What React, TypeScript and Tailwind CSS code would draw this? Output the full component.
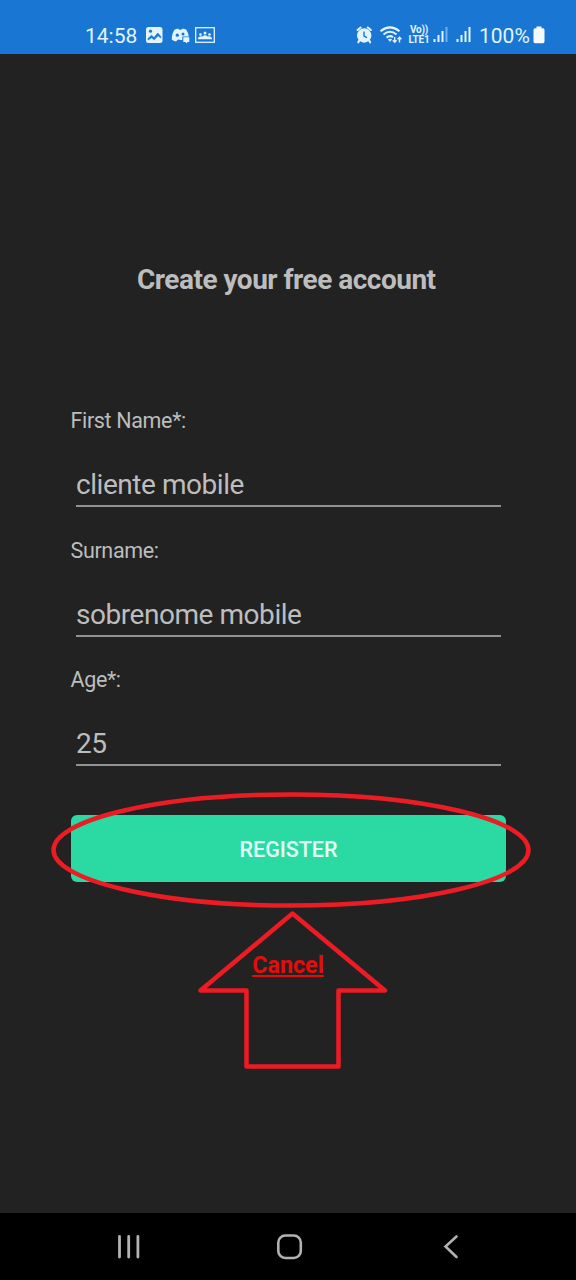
import type { ReactNode } from 'react';

const INK = '#e2f4ff';
const BAR = '#1976d2';

function LeftIcons() {
  return (
    <svg className="ml-[7px] h-[22px] w-[74px]" viewBox="144 24 74 22" fill="none">
      <rect x="146" y="27" width="16.5" height="16" rx="2.5" fill={INK} />
      <circle cx="150.5" cy="31.2" r="1.6" fill={BAR} />
      <path d="M148 40 V38.5 L151.5 35.3 L154 37.5 L157.8 33 L160.800 36.500 V38 L158 35.800 L154.300 39.800 L151.500 37.800 Z" fill={BAR} stroke={BAR} strokeWidth="0.6" />
      <path d="M174.5 29.7 Q177 28.3 178.5 28.8 L179.2 29.8 H181.300 L182 28.8 Q184.5 28.3 186.300 29.7 Q188.500 33 188.800 36.500 H182.300 V40 H181 L178 39.5 L176 41.5 Q173.500 41 171.800 39.800 Q171.500 34 174.500 29.700 Z" fill={INK} />
      <circle cx="177.300" cy="35.2" r="1.6" fill={BAR} />
      <circle cx="183" cy="34" r="1.5" fill={BAR} />
      <path d="M183.300 37.300 H189.300 V42 H187.500 L186.500 43.500 L185.500 42 H183.300 Z" fill={INK} />
      <rect x="195.700" y="27.700" width="18.600" height="14.600" stroke={INK} strokeWidth="1.300" />
      <g fill={INK}>
        <circle cx="205" cy="33" r="1.500" />
        <circle cx="200.500" cy="34.5" r="1.300" />
        <circle cx="209.500" cy="34.5" r="1.300" />
        <path d="M198 39.300 V37.800 Q200 35.5 202.300 36.500 Q205 34 207.700 36.500 Q210 35.5 212 37.800 V39.300 Z" />
      </g>
    </svg>
  );
}

function AlarmWifi() {
  return (
    <svg className="h-[22px] w-[52px]" viewBox="354 24 52 22" fill="none">
      <circle cx="364.200" cy="35.500" r="7.200" fill={INK} />
      <path d="M357.600 30 L360.600 27.500 M370.800 30 L367.800 27.500 M359.300 40.500 L358.300 42.300 M369.100 40.500 L370.100 42.300" stroke={INK} strokeWidth="2.100" strokeLinecap="round" />
      <path d="M364 31.500 V36 L367 37.700" stroke={BAR} strokeWidth="1.400" />
      <path d="M380.500 31.300 Q390 23.500 399.500 31.300 M383.500 34.500 Q390 29 396.500 34.500 M386.500 37.600 Q390 34.800 393 37.300" stroke={INK} strokeWidth="2" />
      <path d="M387.900 39.600 Q390 38 392.100 39.600 L390 41.800 Z" fill={INK} />
      <path d="M394.700 37 V42 M392.800 40.300 L394.700 42.300 L396.600 40.300 M399.500 42.500 V37.500 M397.600 39.300 L399.500 37.300 L401.400 39.300" stroke={INK} strokeWidth="1.400" />
    </svg>
  );
}

function Signal({ weak = false }: { weak?: boolean }) {
  return (
    <svg className="h-[18px] w-[16px]" viewBox="0 0 16 18" fill={INK}>
      <rect x="0.500" y="13" width="2" height="3" />
      <rect x="4.500" y="9" width="2" height="7" />
      <rect x="8.500" y="5" width="2" height="11" />
      <rect x="12.500" y="1" width="2" height="15" opacity={weak ? 0.45 : 1} />
    </svg>
  );
}

function StatusBar() {
  return (
    <header className="flex h-[54px] items-start bg-[#1976d2] pt-6 text-[#e2f4ff]">
      <div className="ml-[85px] w-[52px] text-[21px] leading-[24px] whitespace-nowrap">14:58</div>
      <LeftIcons />
      <div className="ml-[136px] flex h-[22px]">
        <AlarmWifi />
        <div className="ml-[2px] mt-[1px] w-[22px] text-center text-[10px] leading-[10px] font-bold tracking-[-0.2px] whitespace-nowrap">
          <div>Vo))</div>
          <div>LTE1</div>
        </div>
        <div className="mt-[2px] ml-[3px] flex gap-[7px]">
          <Signal weak />
          <Signal />
        </div>
        <div className="ml-[7px] w-[51px] text-[21px] leading-[24px] whitespace-nowrap">100%</div>
        <svg className="ml-[3px] h-[22px] w-[12px]" viewBox="0 0 12 22" fill="#f4faff">
          <path d="M3.500 2.500 H8.500 V4.300 H10 Q11.500 4.300 11.500 6 V17.500 Q11.500 19.200 10 19.200 H2 Q0.500 19.200 0.500 17.500 V6 Q0.500 4.300 2 4.300 H3.500 Z" />
        </svg>
      </div>
    </header>
  );
}

function Field({ label, children }: { label: string; children: ReactNode }) {
  return (
    <div className="h-[129.600px] whitespace-nowrap">
      <div className="pl-[70.500px] pt-px text-[21.500px] leading-[26px] tracking-[-0.350px]">{label}</div>
      <div className="mr-[75px] ml-[76px] mt-[35px] h-[38px] border-b-2 border-[#929292] text-[28px] leading-[32px] tracking-[-0.450px]">{children}</div>
    </div>
  );
}

export default function App() {
  return (
    <div className="relative flex h-[1280px] w-[576px] flex-col overflow-hidden bg-[#222222] font-['Roboto',sans-serif] text-[#bdbdbd]">
      <StatusBar />
      <main className="flex h-[1159px] flex-col">
        <h1 className="mt-[210px] pl-[137px] text-[28px] leading-[32px] font-bold tracking-[-0.500px] whitespace-nowrap">Create your free account</h1>
        <div className="mt-[111px] h-[408px]">
          <Field label="First Name*:">cliente mobile</Field>
          <Field label="Surname:">sobrenome mobile</Field>
          <Field label="Age*:">25</Field>
        </div>
        <button className="ml-[71px] h-[67px] w-[435px] rounded-[6px] bg-[#2bdaa3] pt-[3px] text-[21.500px] font-medium tracking-[-0.050px] text-[#e2fff5]">REGISTER</button>
        <a className="mt-[69px] self-center text-[23.300px] leading-[28px] font-bold text-[#e60c0c] underline decoration-2 underline-offset-[2px]">Cancel</a>
      </main>
      <nav className="flex h-[67px] items-start bg-black pt-[20px]">
        <svg className="ml-[116px] h-[28px] w-[26px]" viewBox="0 0 26 28" stroke="#b2b2b2" strokeWidth="2.800" strokeLinecap="round">
          <path d="M3.500 3.500 V24 M12.700 3.500 V24 M21.900 3.500 V24" />
        </svg>
        <svg className="ml-[133px] h-[28px] w-[28px]" viewBox="0 0 28 28" fill="none" stroke="#b2b2b2" strokeWidth="2.600">
          <rect x="3.300" y="2.500" width="22.500" height="22.500" rx="7" />
        </svg>
        <svg className="ml-[139px] h-[28px] w-[20px]" viewBox="0 0 20 28" fill="none" stroke="#b2b2b2" strokeWidth="2.600" strokeLinecap="round">
          <path d="M14.500 3.500 L3.500 13.500 L14.500 24" />
        </svg>
      </nav>
      <svg className="pointer-events-none absolute top-[785px] left-0 h-[295px] w-[576px]" viewBox="0 785 576 295" fill="none" stroke="#ed1c24" strokeWidth="4.500" strokeLinejoin="round">
        <ellipse cx="291" cy="850" rx="237.500" ry="55.500" />
        <path d="M292.500 913.500 L385 990.500 H338.500 V1066.500 H246.500 V990.500 H200.500 Z" />
      </svg>
    </div>
  );
}
